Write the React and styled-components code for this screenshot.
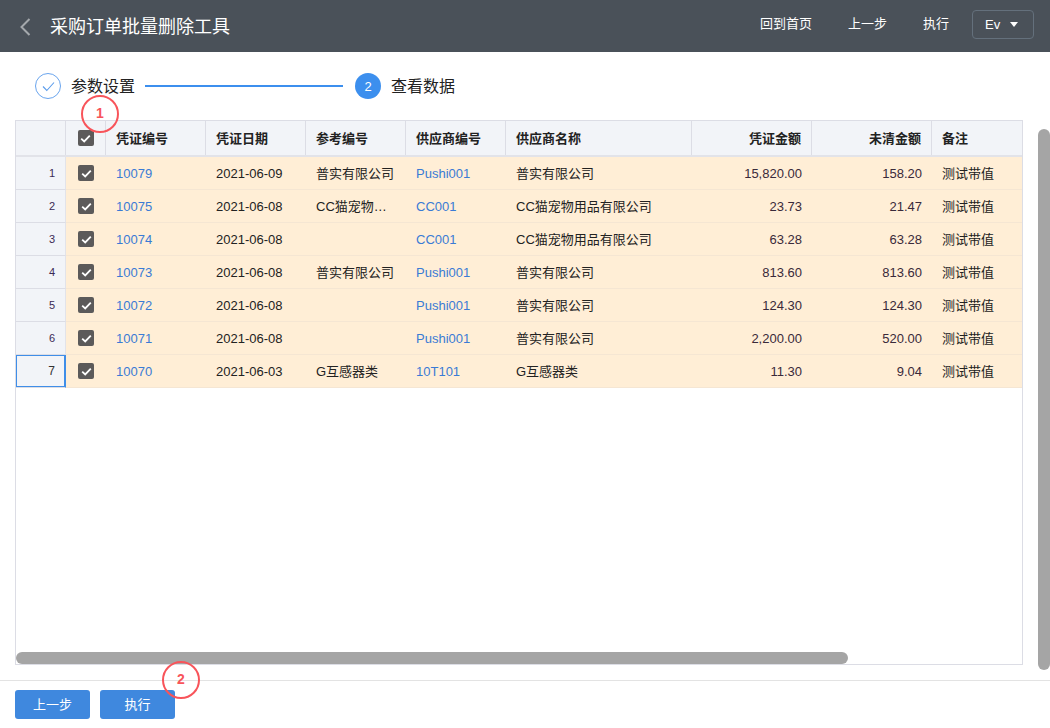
import styled, { createGlobalStyle } from "styled-components";

const FONT = `"Liberation Sans", "Noto Sans CJK SC", sans-serif`;
const COLUMNS = "50px 40px 100px 100px 100px 100px 186px 120px 120px 92px";

const rows = [
  { id: 1, code: "10079", date: "2021-06-09", ref: "普实有限公司", vendorNo: "Pushi001", vendor: "普实有限公司", amount: "15,820.00", open: "158.20" },
  { id: 2, code: "10075", date: "2021-06-08", ref: "CC猫宠物…", vendorNo: "CC001", vendor: "CC猫宠物用品有限公司", amount: "23.73", open: "21.47" },
  { id: 3, code: "10074", date: "2021-06-08", ref: "", vendorNo: "CC001", vendor: "CC猫宠物用品有限公司", amount: "63.28", open: "63.28" },
  { id: 4, code: "10073", date: "2021-06-08", ref: "普实有限公司", vendorNo: "Pushi001", vendor: "普实有限公司", amount: "813.60", open: "813.60" },
  { id: 5, code: "10072", date: "2021-06-08", ref: "", vendorNo: "Pushi001", vendor: "普实有限公司", amount: "124.30", open: "124.30" },
  { id: 6, code: "10071", date: "2021-06-08", ref: "", vendorNo: "Pushi001", vendor: "普实有限公司", amount: "2,200.00", open: "520.00" },
  { id: 7, code: "10070", date: "2021-06-03", ref: "G互感器类", vendorNo: "10T101", vendor: "G互感器类", amount: "11.30", open: "9.04" },
];

const GlobalStyle = createGlobalStyle`
  html, body {
    margin: 0;
    padding: 0;
    background: #fff;
    overflow: hidden;
  }
  body {
    font-family: ${FONT};
    color: #222;
  }
`;

const Page = styled.div`
  position: relative;
  width: 1050px;
  height: 728px;
  display: flex;
  flex-direction: column;
  overflow: hidden;
`;

const TopBar = styled.header`
  height: 52px;
  flex: none;
  box-sizing: border-box;
  display: flex;
  align-items: center;
  background: #4a5159;
  color: #fff;
  padding: 0 16px 3px 19px;
`;

const BackIcon = styled.svg`
  width: 12px;
  height: 18px;
  margin: 4px 19px 0 0;
`;

const Title = styled.h1`
  flex: 1;
  margin: 0;
  font-size: 18px;
  font-weight: 400;
`;

const TopLink = styled.a`
  font-size: 13px;
  margin-right: 36px;
  padding-bottom: 4px;
  &:nth-of-type(3) {
    margin-right: 23px;
  }
`;

const UserMenu = styled.div`
  width: 62px;
  height: 29px;
  box-sizing: border-box;
  display: flex;
  align-items: center;
  padding-left: 12px;
  gap: 10px;
  font-size: 13px;
  border: 1px solid #64707c;
  border-radius: 4px;
`;

const Caret = styled.span`
  width: 0;
  height: 0;
  border-left: 4.5px solid transparent;
  border-right: 4.5px solid transparent;
  border-top: 5px solid #fff;
`;

const Steps = styled.div`
  height: 68px;
  flex: none;
  display: flex;
  align-items: center;
  padding-left: 35px;
`;

const DoneDot = styled.span`
  width: 26px;
  height: 26px;
  box-sizing: border-box;
  border: 1px solid #6aa5ee;
  border-radius: 50%;
  display: flex;
  align-items: center;
  justify-content: center;
`;

const ActiveDot = styled.span`
  width: 26px;
  height: 26px;
  border-radius: 50%;
  background: #3c8fee;
  color: #fff;
  font-size: 13px;
  display: flex;
  align-items: center;
  justify-content: center;
`;

const StepLabel = styled.span`
  font-size: 16px;
  color: #222;
  margin-left: 10px;
  padding-bottom: 2px;
`;

const StepLine = styled.span`
  width: 198px;
  height: 2px;
  background: #3c8fee;
  margin: 0 12px 0 10px;
`;

const TableBox = styled.div`
  position: relative;
  margin-left: 15px;
  width: 1008px;
  height: 545px;
  box-sizing: border-box;
  border: 1px solid #dcdde5;
  overflow: hidden;
`;

const Row = styled.div`
  display: grid;
  grid-template-columns: ${COLUMNS};
  height: ${(p) => (p.$head ? "36px" : "33px")};
  box-sizing: border-box;
  background: ${(p) => (p.$head ? "#f2f4f8" : "#ffeed6")};
  border-bottom: ${(p) => (p.$head ? "2px solid #e2e3e9" : "1px solid #f5e6d3")};
`;

const HeadCell = styled.div`
  display: flex;
  align-items: center;
  justify-content: ${(p) => (p.$center ? "center" : p.$right ? "flex-end" : "flex-start")};
  padding: ${(p) => (p.$center ? "0" : "0 10px 2px")};
  box-sizing: border-box;
  font-size: 13px;
  font-weight: 700;
  color: #222;
  border-right: 1px solid #dcdde5;
  &:last-child {
    border-right: 0;
  }
`;

const Cell = styled.div`
  display: flex;
  align-items: center;
  justify-content: ${(p) => (p.$right ? "flex-end" : "flex-start")};
  padding: 0 10px ${(p) => (p.$lift ? "2px" : "0")};
  box-sizing: border-box;
  font-size: 13px;
  white-space: nowrap;
  overflow: hidden;
  color: ${(p) => (p.$link ? "#3a7bd5" : p.$right ? "#3a2a3a" : "#222")};
`;

const IndexCell = styled.div`
  display: flex;
  align-items: center;
  justify-content: flex-end;
  padding-right: 10px;
  box-sizing: border-box;
  font-size: ${(p) => (p.$active ? "12px" : "11px")};
  color: ${(p) => (p.$active ? "#333" : "#3b2a55")};
  background: #f2f4f8;
  border-right: ${(p) => (p.$active ? "1px solid #3f8ee8" : "1px solid #e2e3e9")};
  box-shadow: ${(p) => (p.$active ? "inset 0 0 0 1px #3f8ee8" : "none")};
  margin-bottom: -1px;
  border-bottom: 1px solid #dcdde5;
`;

const CheckCell = styled.div`
  display: flex;
  align-items: center;
  justify-content: center;
`;

const Check = styled.span`
  width: 16px;
  height: 16px;
  border-radius: 2px;
  background: #5c5a5a;
  display: flex;
  align-items: center;
  justify-content: center;
`;

const VerticalThumb = styled.div`
  position: absolute;
  left: 1038px;
  top: 129px;
  width: 12px;
  height: 541px;
  border-radius: 6px;
  background: #a5a5a5;
`;

const HorizontalThumb = styled.div`
  position: absolute;
  left: 0;
  bottom: 0;
  width: 832px;
  height: 12px;
  border-radius: 6px;
  background: #a5a5a5;
`;

const Footer = styled.footer`
  margin-top: 15px;
  height: 48px;
  flex: none;
  display: flex;
  gap: 10px;
  align-items: flex-start;
  padding: 9px 0 0 15px;
  box-sizing: border-box;
  border-top: 1px solid #e3e3e3;
`;

const Button = styled.button`
  width: 75px;
  height: 29px;
  padding: 0 0 2px;
  border: 0;
  border-radius: 3px;
  background: #3f88de;
  color: #fff;
  font-family: ${FONT};
  font-size: 13px;
`;

const Marker = styled.div`
  position: absolute;
  left: ${(p) => p.$x}px;
  top: ${(p) => p.$y}px;
  width: 38px;
  height: 38px;
  box-sizing: border-box;
  border: 2px solid #f8545a;
  border-radius: 50%;
  color: #f8545a;
  font-size: 14px;
  font-weight: 700;
  display: flex;
  align-items: center;
  justify-content: center;
  padding-bottom: 3px;
`;

const Tick = () => (
  <svg width="11" height="9" viewBox="0 0 11 9" fill="none">
    <path d="M1.2 4.6 4.2 7.4 9.8 1.6" stroke="#fff" strokeWidth="1.8" />
  </svg>
);

const App = () => (
  <Page>
    <GlobalStyle />
    <TopBar>
      <BackIcon viewBox="0 0 12 18" fill="none">
        <path d="M10.5 1 2.5 9l8 8" stroke="#a4a8ac" strokeWidth="2" />
      </BackIcon>
      <Title>采购订单批量删除工具</Title>
      <TopLink>回到首页</TopLink>
      <TopLink>上一步</TopLink>
      <TopLink>执行</TopLink>
      <UserMenu>
        Ev
        <Caret />
      </UserMenu>
    </TopBar>

    <Steps>
      <DoneDot>
        <svg width="13" height="11" viewBox="0 0 13 11" fill="none">
          <path d="M1 5.5 4.8 9.5 12 1.5" stroke="#5b9ceb" strokeWidth="1.1" />
        </svg>
      </DoneDot>
      <StepLabel>参数设置</StepLabel>
      <StepLine />
      <ActiveDot>2</ActiveDot>
      <StepLabel>查看数据</StepLabel>
    </Steps>

    <TableBox>
      <Row $head>
        <HeadCell />
        <HeadCell $center>
          <Check>
            <Tick />
          </Check>
        </HeadCell>
        <HeadCell>凭证编号</HeadCell>
        <HeadCell>凭证日期</HeadCell>
        <HeadCell>参考编号</HeadCell>
        <HeadCell>供应商编号</HeadCell>
        <HeadCell>供应商名称</HeadCell>
        <HeadCell $right>凭证金额</HeadCell>
        <HeadCell $right>未清金额</HeadCell>
        <HeadCell>备注</HeadCell>
      </Row>
      {rows.map((row) => (
        <Row key={row.id}>
          <IndexCell $active={row.id === 7}>{row.id}</IndexCell>
          <CheckCell>
            <Check>
              <Tick />
            </Check>
          </CheckCell>
          <Cell $link>{row.code}</Cell>
          <Cell>{row.date}</Cell>
          <Cell $lift>{row.ref}</Cell>
          <Cell $link>{row.vendorNo}</Cell>
          <Cell $lift>{row.vendor}</Cell>
          <Cell $right>{row.amount}</Cell>
          <Cell $right>{row.open}</Cell>
          <Cell $lift>测试带值</Cell>
        </Row>
      ))}
      <HorizontalThumb />
    </TableBox>

    <Footer>
      <Button>上一步</Button>
      <Button>执行</Button>
    </Footer>

    <VerticalThumb />
    <Marker $x={81} $y={95}>1</Marker>
    <Marker $x={162} $y={661}>2</Marker>
  </Page>
);

export default App;
